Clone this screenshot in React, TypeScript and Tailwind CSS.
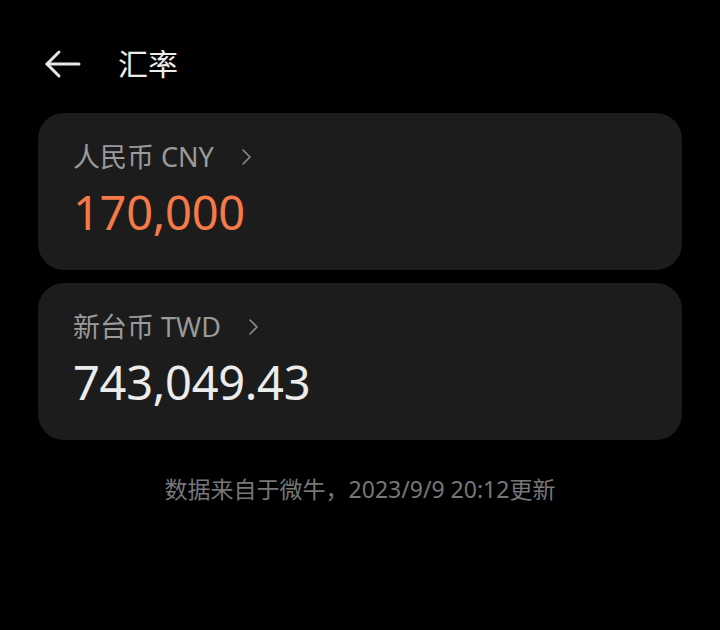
interface RateCardProps {
  label: string;
  value: string;
  highlight?: boolean;
}

const RateCard = ({ label, value, highlight }: RateCardProps) => {
  return (
    <div className="h-[157px] rounded-[26px] bg-[#1c1c1c] pl-[35px] pt-[28px]">
      <div className="flex h-[32px] items-center text-[27px] leading-[32px] text-[#9a9a9a]">
        <span>{label}</span>
        <svg className="ml-[26px]" width="14" height="18" viewBox="0 0 14 18" fill="none" stroke="#8a8a8a" strokeWidth="1.6" strokeLinecap="round" strokeLinejoin="round">
          <path d="M3 2 L10 9 L3 16" />
        </svg>
      </div>
      <div
        className={
          "mt-[9px] text-[47px] leading-[60px] tracking-[-0.3px] " +
          (highlight ? "text-[#f57a48]" : "text-[#ececec]")
        }
      >
        {value}
      </div>
    </div>
  );
};

export default function App() {
  return (
    <div
      className="h-[630px] w-[720px] bg-black"
      style={{ fontFamily: '"Noto Sans", "Noto Sans CJK SC", sans-serif' }}
    >
      <div className="flex h-[113px] items-center pt-[14px] pl-[44px]">
        <svg width="38" height="30" viewBox="0 0 38 30" fill="none" stroke="#e8e8e8" strokeWidth="3" strokeLinecap="round" strokeLinejoin="round">
          <path d="M3 15 H35" />
          <path d="M15 3 L3 15 L15 27" />
        </svg>
        <span className="ml-[36px] text-[30px] text-[#ececec]">汇率</span>
      </div>
      <div className="flex flex-col gap-[13px] px-[38px]">
        <RateCard label="人民币 CNY" value="170,000" highlight />
        <RateCard label="新台币 TWD" value="743,049.43" />
      </div>
      <div className="mt-[32px] text-center text-[23px] text-[#777777]">
        数据来自于微牛，2023/9/9 20:12更新
      </div>
    </div>
  );
}
